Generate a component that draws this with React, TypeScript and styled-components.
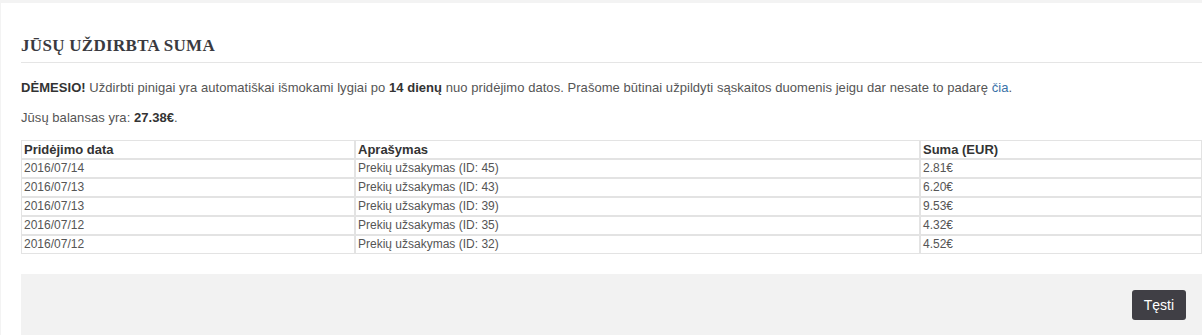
import React from 'react';
import styled, { createGlobalStyle } from 'styled-components';

const GlobalStyle = createGlobalStyle`
	html, body {
		margin: 0;
		padding: 0;
		background: #f3f3f3;
	}
	body {
		font-family: 'Liberation Sans', Arial, sans-serif;
		font-size: 13px;
		color: #555;
	}
`;

const SPage = styled.div`
	padding: 3px 0 0 1px;
`;

const SPanel = styled.section`
	background: #fff;
	padding: 31px 0 0 20px;
`;

const SHeader = styled.header`
	border-bottom: 1px solid #e5e5e5;
	padding-bottom: 4px;
`;

const STitle = styled.h2`
	margin: 0;
	font-family: 'Liberation Serif', 'DejaVu Serif', serif;
	font-size: 17px;
	line-height: 24px;
	font-weight: 700;
	color: #3a3a40;
	letter-spacing: 0.3px;
`;

const SText = styled.p<{ $gap: number }>`
	margin: ${({ $gap }) => $gap}px 0 0;
	font-size: 13px;
	line-height: 17px;
	letter-spacing: 0.05px;
`;

const SStrong = styled.strong`
	color: #333;
`;

const SLink = styled.a`
	color: #3a72a8;
	text-decoration: none;
`;

const STable = styled.table`
	margin-top: 14px;
	width: 100%;
	border-collapse: separate;
	border-spacing: 0;
	table-layout: fixed;
`;

const SCell = styled.td<{ $head?: boolean }>`
	border: 1px solid #e3e3e3;
	padding: 0 2px;
	line-height: 17px;
	text-align: left;
	font-size: ${({ $head }) => ($head ? 13 : 12)}px;
	font-weight: ${({ $head }) => ($head ? 700 : 400)};
	color: ${({ $head }) => ($head ? '#333' : '#555')};
	white-space: nowrap;
`;

const SFooter = styled.footer`
	margin-top: 20px;
	background: #f2f2f2;
	padding: 16px 16px 16px 0;
	display: flex;
	justify-content: flex-end;
`;

const SButton = styled.button`
	height: 30px;
	padding: 0 12px;
	border: none;
	border-radius: 3px;
	background: #403f45;
	color: #fff;
	font-family: 'Liberation Sans', Arial, sans-serif;
	font-size: 14px;
	cursor: pointer;
`;

const rows = [
	{ date: '2016/07/14', id: 45, sum: '2.81€' },
	{ date: '2016/07/13', id: 43, sum: '6.20€' },
	{ date: '2016/07/13', id: 39, sum: '9.53€' },
	{ date: '2016/07/12', id: 35, sum: '4.32€' },
	{ date: '2016/07/12', id: 32, sum: '4.52€' },
];

export default function App(): React.ReactElement {
	return (
		<SPage>
			<GlobalStyle />
			<SPanel>
				<SHeader>
					<STitle>JŪSŲ UŽDIRBTA SUMA</STitle>
				</SHeader>
				<SText $gap={16}>
					<SStrong>DĖMESIO!</SStrong> Uždirbti pinigai yra automatiškai išmokami lygiai po{' '}
					<SStrong>14 dienų</SStrong> nuo pridėjimo datos. Prašome būtinai užpildyti sąskaitos
					duomenis jeigu dar nesate to padarę <SLink href="#">čia</SLink>.
				</SText>
				<SText $gap={13}>
					Jūsų balansas yra: <SStrong>27.38€</SStrong>.
				</SText>
				<STable>
					<colgroup>
						<col style={{ width: 334 }} />
						<col style={{ width: 565 }} />
						<col />
					</colgroup>
					<thead>
						<tr>
							<SCell as="th" $head>Pridėjimo data</SCell>
							<SCell as="th" $head>Aprašymas</SCell>
							<SCell as="th" $head>Suma (EUR)</SCell>
						</tr>
					</thead>
					<tbody>
						{rows.map((r) => (
							<tr key={r.id}>
								<SCell>{r.date}</SCell>
								<SCell>Prekių užsakymas (ID: {r.id})</SCell>
								<SCell>{r.sum}</SCell>
							</tr>
						))}
					</tbody>
				</STable>
				<SFooter>
					<SButton type="button">Tęsti</SButton>
				</SFooter>
			</SPanel>
		</SPage>
	);
}
